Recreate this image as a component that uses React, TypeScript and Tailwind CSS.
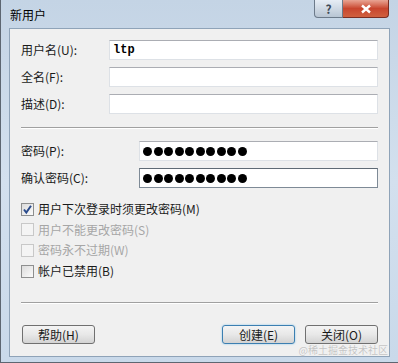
import React from "react";

const cn = '"Noto Sans CJK SC", "Liberation Sans", sans-serif';

function TextBox({ value, dots, focused }: { value?: string; dots?: number; focused?: boolean }) {
  return (
    <div
      className={`flex-1 h-[20px] bg-white border flex items-center px-[3px] ${
        focused
          ? "border-[#7e8a96] border-t-[#5f6a75]"
          : "border-[#dde1e6] border-t-[#abadb3]"
      }`}
    >
      {value && (
        <span className="text-[12px] font-bold text-black" style={{ fontFamily: '"Liberation Mono", monospace' }}>
          {value}
        </span>
      )}
      {dots ? (
        <div className="flex gap-[1.5px]">
          {Array.from({ length: dots }).map((_, i) => (
            <span key={i} className="block w-[9px] h-[9px] rounded-full bg-black" />
          ))}
        </div>
      ) : null}
    </div>
  );
}

function Check({ label, checked, disabled }: { label: string; checked?: boolean; disabled?: boolean }) {
  return (
    <div className="h-[20.6px] flex items-center gap-[4px]">
      <div
        className={`w-[13px] h-[13px] border flex items-center justify-center ${
          disabled
            ? "border-[#c8c8c8] bg-[#f4f4f4]"
            : "border-[#8e8f8f] bg-gradient-to-br from-[#dcdcdc] to-[#fbfbfb]"
        }`}
      >
        {checked && (
          <svg width="11" height="11" viewBox="0 0 11 11">
            <path d="M2 5.5 L4.3 8.5 L9 1.8" fill="none" stroke="#2a4b8c" strokeWidth="2" />
          </svg>
        )}
      </div>
      <span className={`text-[12px] ${disabled ? "text-[#a6a6a6]" : "text-[#1a1a1a]"}`}>{label}</span>
    </div>
  );
}

function Btn({ label, def }: { label: string; def?: boolean }) {
  return (
    <div
      className={`w-[73px] h-[19px] rounded-[3px] border flex items-center justify-center text-[12px] text-[#1a1a1a] bg-gradient-to-b from-[#f4f4f4] via-[#e8e8e8] to-[#d3d3d3] ${
        def ? "border-[#3c7fb1] shadow-[0_0_2px_#7ec0ea]" : "border-[#707070]"
      }`}
    >
      {label}
    </div>
  );
}

function Sep() {
  return <div className="h-[2px] border-t border-[#a0a0a0] border-b border-b-white" />;
}

export default function App() {
  return (
    <div
      className="w-[398px] h-[363px] relative overflow-hidden flex flex-col border-l border-b border-[#5d6671] bg-gradient-to-b from-[#c4d4e5] via-[#d3e0ee] to-[#c9d9ea]"
      style={{ fontFamily: cn }}
    >
      <div className="h-[28px] flex items-start shrink-0">
        <span className="ml-[9px] mt-[6px] text-[12px] text-black">新用户</span>
        <div className="ml-auto mr-[9px] flex">
          <div className="w-[29px] h-[18px] rounded-bl-[4px] border border-t-0 border-[#6c7a8a] bg-gradient-to-b from-[#e6edf5] to-[#b8c5d3] flex items-center justify-center text-[12px] font-bold text-[#3d4a58]">
            ?
          </div>
          <div className="w-[46px] h-[18px] rounded-br-[4px] border border-t-0 border-l-0 border-[#7a2d22] bg-gradient-to-b from-[#e8a493] via-[#c8452e] to-[#d0603f] flex items-center justify-center">
            <svg width="12" height="10" viewBox="0 0 12 10">
              <path d="M2 1.5 L10 8.5 M10 1.5 L2 8.5" stroke="white" strokeWidth="2.4" />
            </svg>
          </div>
        </div>
      </div>

      <div className="mx-[8px] mb-[5px] flex-1 border border-[#8fa3b8] bg-[#f0f0f0] px-[11px] pt-[11px] flex flex-col">
        <div className="flex flex-col gap-[7px]">
          <div className="flex items-center">
            <span className="w-[88px] text-[12px] text-[#1a1a1a]">用户名(U):</span>
            <TextBox value="ltp" />
          </div>
          <div className="flex items-center">
            <span className="w-[88px] text-[12px] text-[#1a1a1a]">全名(F):</span>
            <TextBox />
          </div>
          <div className="flex items-center">
            <span className="w-[88px] text-[12px] text-[#1a1a1a]">描述(D):</span>
            <TextBox />
          </div>
        </div>

        <div className="mt-[13px]">
          <Sep />
        </div>

        <div className="mt-[12px] flex flex-col gap-[7px]">
          <div className="flex items-center">
            <span className="w-[118px] text-[12px] text-[#1a1a1a]">密码(P):</span>
            <TextBox dots={10} />
          </div>
          <div className="flex items-center">
            <span className="w-[118px] text-[12px] text-[#1a1a1a]">确认密码(C):</span>
            <TextBox dots={10} focused />
          </div>
        </div>

        <div className="mt-[11px] flex flex-col">
          <Check label="用户下次登录时须更改密码(M)" checked />
          <Check label="用户不能更改密码(S)" disabled />
          <Check label="密码永不过期(W)" disabled />
          <Check label="帐户已禁用(B)" />
        </div>

        <div className="mt-[21px]">
          <Sep />
        </div>

        <div className="mt-[21px] flex items-center">
          <div className="ml-[1px]">
            <Btn label="帮助(H)" />
          </div>
          <div className="ml-auto flex gap-[10px]">
            <Btn label="创建(E)" def />
            <Btn label="关闭(O)" />
          </div>
        </div>
      </div>

      <span
        className="absolute right-[10px] bottom-[7px] text-[10px] leading-none text-[#c4c4c4]"
        style={{ textShadow: "0 0 1px #fff" }}
      >
        @稀土掘金技术社区
      </span>
    </div>
  );
}
